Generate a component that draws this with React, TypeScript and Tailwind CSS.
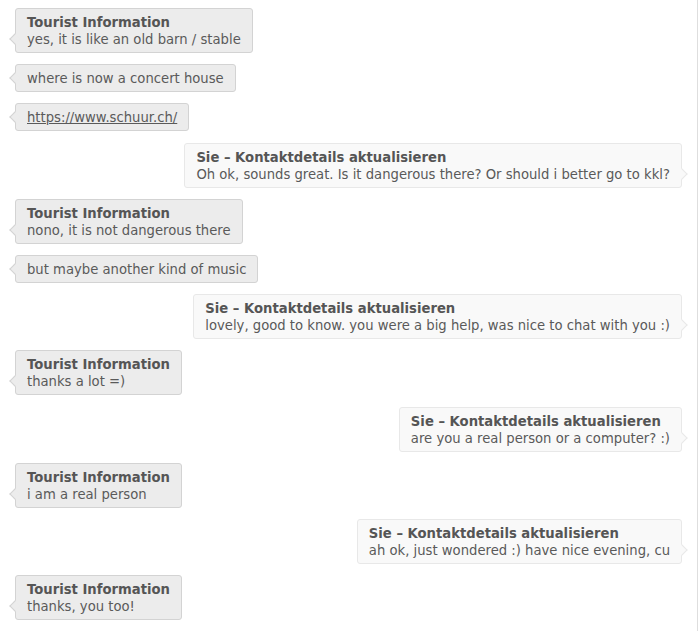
const messages = [
  { me: false, name: 'Tourist Information', text: 'yes, it is like an old barn / stable' },
  { me: false, text: 'where is now a concert house' },
  { me: false, text: 'https://www.schuur.ch/', link: true },
  { me: true, name: 'Sie – Kontaktdetails aktualisieren', text: 'Oh ok, sounds great. Is it dangerous there? Or should i better go to kkl?' },
  { me: false, name: 'Tourist Information', text: 'nono, it is not dangerous there' },
  { me: false, text: 'but maybe another kind of music' },
  { me: true, name: 'Sie – Kontaktdetails aktualisieren', text: 'lovely, good to know. you were a big help, was nice to chat with you :)' },
  { me: false, name: 'Tourist Information', text: 'thanks a lot =)' },
  { me: true, name: 'Sie – Kontaktdetails aktualisieren', text: 'are you a real person or a computer? :)' },
  { me: false, name: 'Tourist Information', text: 'i am a real person' },
  { me: true, name: 'Sie – Kontaktdetails aktualisieren', text: 'ah ok, just wondered :) have nice evening, cu' },
  { me: false, name: 'Tourist Information', text: 'thanks, you too!' },
]

type Msg = { me: boolean; name?: string; text: string; link?: boolean }

function Bubble({ m }: { m: Msg }) {
  return (
    <div className={m.me ? 'flex justify-end' : 'flex justify-start'}>
      <div
        className={
          m.me
            ? 'relative rounded-[3px] border border-[#e8e8e8] bg-[#f9f9f9] px-[11px] pt-[5px] pb-[4px] leading-[17px]'
            : 'relative rounded-[3px] border border-[#d3d3d3] bg-[#ececec] px-[11px] pt-[5px] pb-[4px] leading-[17px]'
        }
      >
        {/* tail */}
        {m.me ? (
          <span className="absolute right-[-5px] bottom-[9px] h-[8px] w-[8px] rotate-45 border-t border-r border-[#e8e8e8] bg-[#f9f9f9]" />
        ) : (
          <span className="absolute left-[-5px] bottom-[9px] h-[8px] w-[8px] rotate-45 border-b border-l border-[#d3d3d3] bg-[#ececec]" />
        )}
        {m.name && <div className="relative font-bold text-[#555]">{m.name}</div>}
        <div className="relative text-[#5a5a5a]">
          {m.link ? <span className="underline">{m.text}</span> : m.text}
        </div>
      </div>
    </div>
  )
}

export default function App() {
  return (
    <div className="flex h-[631px] w-[700px] bg-white font-['DejaVu_Sans',Verdana,sans-serif] text-[13.2px]">
      <div className="flex flex-1 flex-col gap-[11.2px] pt-[8px] pl-[15px] pr-[15px]">
        {messages.map((m, i) => (
          <Bubble key={i} m={m} />
        ))}
      </div>
      <div className="w-[3px] border-l border-[#dedede]" />
    </div>
  )
}
